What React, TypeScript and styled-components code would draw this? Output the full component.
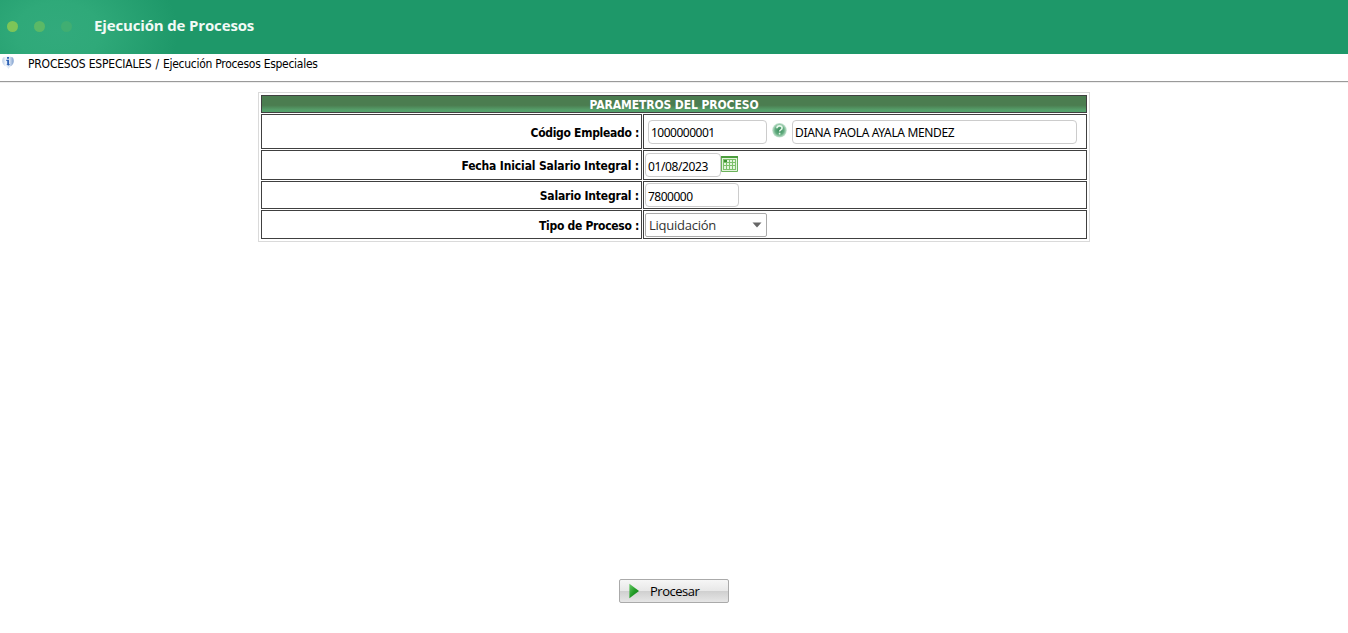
import React from 'react';
import styled, { createGlobalStyle } from 'styled-components';

const GlobalStyle = createGlobalStyle`
  * { box-sizing: border-box; }
  body { margin: 0; background: #fff; color: #000; overflow: hidden; font-family: "DejaVu Sans Condensed", "DejaVu Sans", sans-serif; font-stretch: condensed; }
`;

const Page = styled.div`
  height: 633px;
  display: flex;
  flex-direction: column;
`;

const Banner = styled.header`
  flex: none;
  height: 54px;
  display: flex;
  align-items: center;
  padding: 0 0 1px 7px;
  background: radial-gradient(ellipse 120px 85px at 58px 32px, #32aa7c 0, #2fa979 35%, rgba(30, 152, 105, 0) 100%), #1e9869;
`;

const Dot = styled.span<{ $color: string }>`
  width: 11px;
  height: 11px;
  margin-right: 16px;
  border-radius: 50%;
  background: ${(p) => p.$color};
`;

const Title = styled.h1`
  margin: 0 0 3px 6px;
  color: #f2faf6;
  font: bold 15px/20px "Open Sans", "Noto Sans", sans-serif;
  letter-spacing: -0.15px;
  white-space: nowrap;
`;

const Breadcrumb = styled.nav`
  flex: none;
  height: 29px;
  display: flex;
  padding-left: 2px;
  border-bottom: 1px solid #eee;
  box-shadow: inset 0 -1px #9a9a9a;
  font-size: 12px;
  line-height: 21px;
  letter-spacing: -0.2px;
  white-space: nowrap;

  svg { flex: none; margin: 1px 14px 0 0; }
`;

const Separator = styled.span`
  margin: 0 4px;
`;

const CurrentPage = styled.span`
  letter-spacing: -0.28px;
`;

const Panel = styled.section`
  flex: none;
  width: 832px;
  margin: 9px 0 0 258px;
  padding: 2px;
  border: 1px solid #dadada;
  display: flex;
  flex-direction: column;
  gap: 1px;
`;

const PanelTitle = styled.h2`
  margin: 0;
  height: 18px;
  border: 1px solid #404040;
  background: linear-gradient(#4b7d50 0, #4b7d50 58%, #559d69 85%, #53a36d 100%);
  color: #fff;
  font-size: 12px;
  line-height: 18px;
  letter-spacing: -0.09px;
  text-align: center;
`;

const Row = styled.div<{ $height: number }>`
  display: grid;
  grid-template-columns: 381px 444px;
  gap: 1px;
  height: ${(p) => p.$height}px;
`;

const Label = styled.label<{ $spacing?: number }>`
  display: flex;
  align-items: center;
  justify-content: flex-end;
  padding: 2px 2px 0 0;
  border: 1px solid #404040;
  font-size: 12px;
  font-weight: bold;
  letter-spacing: ${(p) => p.$spacing ?? -0.3}px;
  white-space: nowrap;
`;

const Value = styled.div<{ $inset?: number }>`
  display: flex;
  align-items: center;
  padding-left: ${(p) => p.$inset ?? 1}px;
  border: 1px solid #404040;
`;

const Field = styled.input<{ $width: number; $spacing?: number }>`
  width: ${(p) => p.$width}px;
  height: 24px;
  padding: 2px 2px 0;
  border: 1px solid #ccc;
  border-radius: 4px;
  background: #fff;
  color: #000;
  font: 12px "Noto Sans", sans-serif;
  letter-spacing: ${(p) => p.$spacing ?? 0}px;
`;

const HelpButton = styled.span`
  display: flex;
  margin: 0 5px 3px;
`;

const CalendarButton = styled.span`
  display: flex;
  margin-bottom: 2px;
`;

const Select = styled.div`
  width: 122px;
  height: 24px;
  display: flex;
  align-items: center;
  justify-content: space-between;
  padding: 0 4px 0 3px;
  border: 1px solid #aaa;
  border-radius: 2px;
  color: #333;
  font: 13px "Open Sans", sans-serif;
  letter-spacing: -0.25px;
`;

const Actions = styled.footer`
  margin: auto 0 30px 619px;
`;

const RunButton = styled.button`
  width: 110px;
  height: 24px;
  display: flex;
  align-items: center;
  gap: 10px;
  padding: 0 0 0 9px;
  border: 1px solid #aaa;
  border-radius: 2px;
  background: linear-gradient(#f6f6f6 0, #e8e8e8 48%, #d0d0d0 52%, #e6e6e6 100%);
  color: #000;
  font: 13px "Open Sans", sans-serif;
  letter-spacing: -0.5px;
`;

const InfoIcon = () => (
  <svg width="12" height="16" viewBox="0 0 12 16">
    <defs>
      <linearGradient id="info"><stop offset="0" stopColor="#b9cde8" /><stop offset=".3" stopColor="#eef4fb" /><stop offset=".6" stopColor="#dce7f5" /><stop offset="1" stopColor="#7f9fce" /></linearGradient>
    </defs>
    <path d="M1 2.5Q6 .5 11 2.5Q12.5 6 11 9Q9.8 11 8 11.5L6.5 14L4.5 11.5Q2 11 1 9Q-.5 6 1 2.5Z" fill="url(#info)" />
    <path d="M5 2H7V3.7H5ZM4.3 4.8H7V9H8.2L6.2 10.8L4.4 9H5.2V6H4.3Z" fill="#2e62b5" />
  </svg>
);

const HelpIcon = () => (
  <svg width="15" height="16" viewBox="0 0 15 16">
    <defs>
      <radialGradient id="help"><stop offset="0" stopColor="#378a5a" /><stop offset=".6" stopColor="#63ad80" /><stop offset="1" stopColor="#cce6d5" /></radialGradient>
    </defs>
    <circle cx="7.5" cy="8.3" r="7.3" fill="url(#help)" />
    <path d="M4.9 6.2Q5 3.9 7.5 3.9Q10.1 3.9 10.1 6Q10.1 7.3 8.5 8.1Q7.6 8.6 7.6 9.6M7.6 10.8V12.4" fill="none" stroke="#e6f7ea" strokeWidth="1.6" />
  </svg>
);

const CalendarIcon = () => (
  <svg width="17" height="16" viewBox="0 0 17 16">
    <path d="M.5.5H16.5V15.5H.5Z" fill="#e3f4dc" stroke="#6bb35b" />
    <path d="M0 0H17V2H0Z" fill="#4c9e3e" />
    <path d="M2 3H15V14H2Z" fill="#7cc06a" />
    <path d="M6 4H8V6H6ZM9 4H11V6H9ZM12 4H14V6H12ZM3 7H5V9H3ZM6 7H8V9H6ZM9 7H11V9H9ZM12 7H14V9H12ZM3 10H5V13H3ZM6 10H8V13H6ZM9 10H11V13H9ZM12 10H14V13H12Z" fill="#e4f5dd" />
    <path d="M3 4H6V6H3Z" fill="#3b9132" />
  </svg>
);

const Caret = () => (
  <svg width="10" height="6" viewBox="0 0 10 6"><path d="M.5.5H9.5L5 5.5Z" fill="#666" /></svg>
);

const PlayIcon = () => (
  <svg width="11" height="16" viewBox="0 0 11 16">
    <defs><linearGradient id="play" x2="1" y2="1"><stop stopColor="#69c969" /><stop offset=".5" stopColor="#249d28" /><stop offset="1" stopColor="#0b7611" /></linearGradient></defs>
    <path d="M.4 .8L10 8L.4 15.2Z" fill="url(#play)" />
  </svg>
);

export default function App() {
  return (
    <Page>
      <GlobalStyle />
      <Banner>
        <Dot $color="#7dc558" />
        <Dot $color="#5bb966" />
        <Dot $color="#40ae72" />
        <Title>Ejecución de Procesos</Title>
      </Banner>
      <Breadcrumb>
        <InfoIcon />
        <span>PROCESOS ESPECIALES</span>
        <Separator>/</Separator>
        <CurrentPage>Ejecución Procesos Especiales</CurrentPage>
      </Breadcrumb>
      <Panel>
        <PanelTitle>PARAMETROS DEL PROCESO</PanelTitle>
        <Row $height={35}>
          <Label>Código Empleado :</Label>
          <Value $inset={4}>
            <Field $width={119} $spacing={-0.5} defaultValue="1000000001" />
            <HelpButton><HelpIcon /></HelpButton>
            <Field $width={285} $spacing={-0.35} defaultValue="DIANA PAOLA AYALA MENDEZ" />
          </Value>
        </Row>
        <Row $height={30}>
          <Label $spacing={-0.14}>Fecha Inicial Salario Integral :</Label>
          <Value>
            <Field $width={76} $spacing={-0.4} defaultValue="01/08/2023" />
            <CalendarButton><CalendarIcon /></CalendarButton>
          </Value>
        </Row>
        <Row $height={28}>
          <Label $spacing={-0.18}>Salario Integral :</Label>
          <Value><Field $width={94} $spacing={-0.5} defaultValue="7800000" /></Value>
        </Row>
        <Row $height={29}>
          <Label $spacing={-0.3}>Tipo de Proceso :</Label>
          <Value><Select>Liquidación<Caret /></Select></Value>
        </Row>
      </Panel>
      <Actions><RunButton><PlayIcon />Procesar</RunButton></Actions>
    </Page>
  );
}
